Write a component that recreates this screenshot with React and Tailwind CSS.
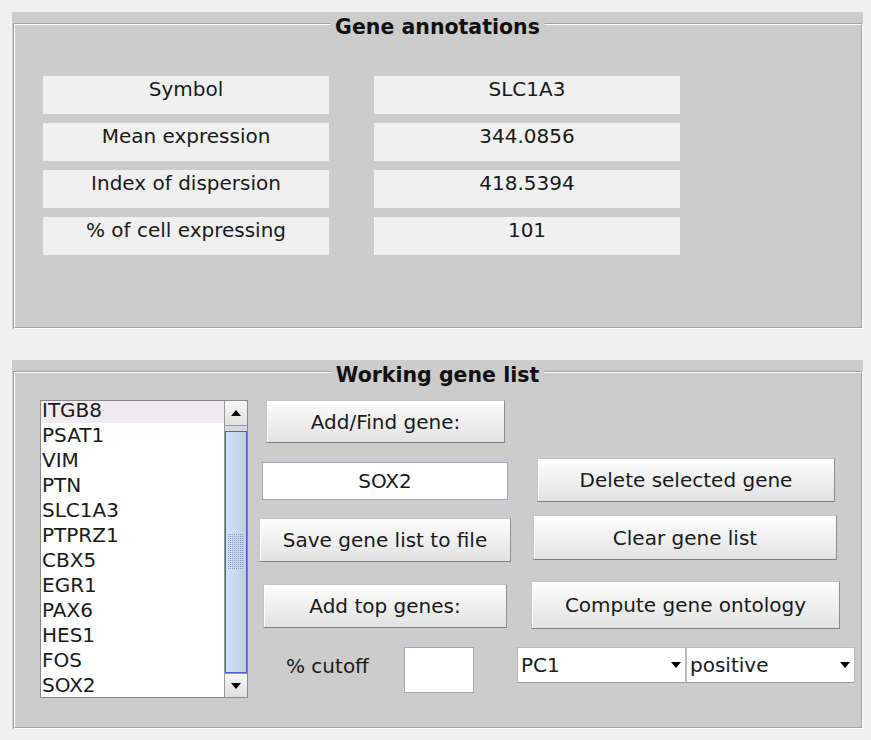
import React from "react";

const genes = ["ITGB8", "PSAT1", "VIM", "PTN", "SLC1A3", "PTPRZ1", "CBX5", "EGR1", "PAX6", "HES1", "FOS", "SOX2"];

const annotations = [
  ["Symbol", "SLC1A3"],
  ["Mean expression", "344.0856"],
  ["Index of dispersion", "418.5394"],
  ["% of cell expressing", "101"],
];

// etched-border panel with title sitting on the top line
function Panel({ title, height, children }) {
  return (
    <div className={`relative flex w-[851px] ${height} flex-col bg-[#cccccc] pl-[1px] pt-[11px]`}>
      <div className="flex-1 border border-b-white border-l-[#a2a2a2] border-r-white border-t-[#a2a2a2]">
        <div className="h-full border border-b-[#a2a2a2] border-l-white border-r-[#a2a2a2] border-t-white">
          {children}
        </div>
      </div>
      <div className="absolute left-1/2 top-[5px] -translate-x-1/2 bg-[#cccccc] px-[5px] text-[20.5px] font-bold leading-none text-[#111]">
        {title}
      </div>
    </div>
  );
}

function Button({ className = "", children }) {
  return (
    <div
      className={`flex items-center justify-center border border-[#c4c4c4] border-b-[#7f7f7f] border-r-[#8e8e8e] bg-linear-to-b from-[#fdfdfd] to-[#e2e2e2] shadow-[inset_1px_1px_0_#ffffff] ${className}`}
    >
      {children}
    </div>
  );
}

function Arrow({ down }) {
  return (
    <svg width="10" height="6" viewBox="0 0 10 6">
      {down ? <path d="M0 0 L10 0 L5 6 Z" fill="#000" /> : <path d="M0 6 L10 6 L5 0 Z" fill="#000" />}
    </svg>
  );
}

function Select({ value }) {
  return (
    <div className="flex h-[36px] w-[169px] items-center justify-between border border-[#b8b8b8] border-b-[#9a9a9a] bg-white pl-[3px] pr-[4px]">
      <span>{value}</span>
      <Arrow down />
    </div>
  );
}

function GeneList() {
  return (
    <div className="flex h-[298px] w-[208px] border border-[#8a8a8a] bg-white">
      <div className="flex-1 overflow-hidden">
        <div className="-mt-[3px]">
          {genes.map((g, i) => (
            <div key={g} className={`h-[25px] pl-[1px] leading-[25px] ${i === 0 ? "bg-[#eeecf1]" : ""}`}>
              {g}
            </div>
          ))}
        </div>
      </div>
      <div className="flex w-[23px] flex-col border-l border-[#9a9a9a] bg-[#dadada]">
        <div className="flex h-[25px] items-center justify-center border-b border-[#9a9a9a] bg-linear-to-b from-[#f6f6f6] to-[#e0e0e0]">
          <Arrow />
        </div>
        <div className="mt-[5px] flex flex-1 items-center justify-center border border-[#3f63c9] bg-linear-to-r from-[#d5e2f1] to-[#bcd0e8]">
          <svg width="16" height="36" viewBox="0 0 16 36">
            <defs>
              <pattern id="grip" width="2" height="2" patternUnits="userSpaceOnUse">
                <rect width="1" height="1" fill="#8099c0" />
              </pattern>
            </defs>
            <rect width="16" height="36" fill="url(#grip)" />
          </svg>
        </div>
        <div className="flex h-[24px] items-center justify-center border-t border-[#9a9a9a] bg-linear-to-b from-[#f6f6f6] to-[#e0e0e0]">
          <Arrow down />
        </div>
      </div>
    </div>
  );
}

export default function App() {
  return (
    <div className="min-h-[740px] w-[871px] bg-[#f0f0f0] pl-[12px] pt-[12px] font-['DejaVu_Sans',sans-serif] text-[20px] text-[#1a1a1a]">
      <Panel title="Gene annotations" height="h-[317px]">
        <div className="ml-[28px] mt-[51px] flex flex-col gap-[9px]">
          {annotations.map(([label, value]) => (
            <div key={label} className="flex gap-[45px]">
              <div className="h-[38px] w-[286px] bg-[#f0f0f0] pt-[4px] text-center leading-[19px]">{label}</div>
              <div className="h-[38px] w-[306px] bg-[#f0f0f0] pt-[4px] text-center leading-[19px]">{value}</div>
            </div>
          ))}
        </div>
      </Panel>

      <div className="h-[31px]" />

      <Panel title="Working gene list" height="h-[369px]">
        <div className="ml-[25px] mt-[27px] flex">
          <GeneList />

          {/* middle column */}
          <div className="ml-[11px] flex w-[252px] flex-col">
            <Button className="ml-[7px] h-[43px] w-[239px]">Add/Find gene:</Button>
            <div className="ml-[3px] mt-[19px] flex h-[38px] w-[246px] items-center justify-center border border-[#9ea5c2] bg-white">
              SOX2
            </div>
            <Button className="mt-[18px] h-[44px] w-[252px]">Save gene list to file</Button>
            <Button className="ml-[4px] mt-[22px] h-[44px] w-[244px]">Add top genes:</Button>
            <div className="mt-[19px] flex h-[46px] items-start">
              <span className="ml-[27px] mt-[4px] w-[118px]">% cutoff</span>
              <div className="h-[46px] w-[70px] border border-[#9ea5c2] bg-white" />
            </div>
          </div>

          {/* right column */}
          <div className="ml-[5px] flex flex-col">
            <Button className="ml-[21px] mt-[58px] h-[44px] w-[298px]">Delete selected gene</Button>
            <Button className="ml-[17px] mt-[13px] h-[45px] w-[304px]">Clear gene list</Button>
            <Button className="ml-[15px] mt-[21px] h-[48px] w-[309px]">Compute gene ontology</Button>
            <div className="ml-[1px] mt-[18px] flex">
              <Select value="PC1" />
              <Select value="positive" />
            </div>
          </div>
        </div>
      </Panel>
    </div>
  );
}
